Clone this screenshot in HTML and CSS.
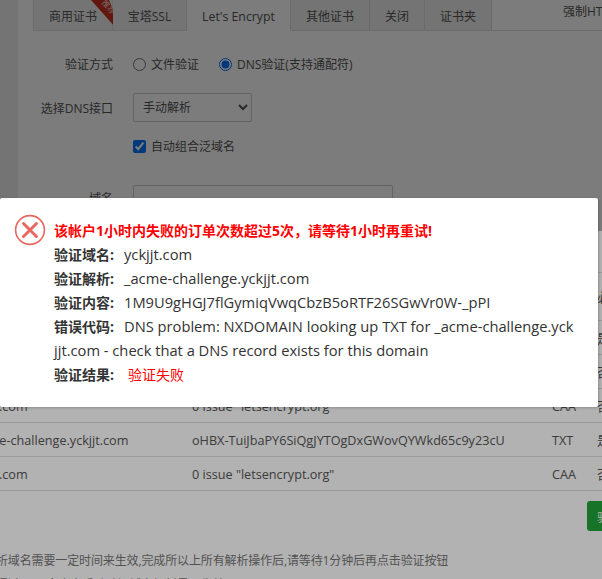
FILE: index.html
```html
<!DOCTYPE html>
<html lang="zh">
<head>
<meta charset="utf-8">
<title>SSL</title>
<link rel="stylesheet" href="styles.css">
</head>
<body>
<div class="page">
  <section class="upper">
    <div class="tabs">
      <div class="tab t1">商用证书
        <svg class="ribbon" viewBox="0 0 26 29" width="26" height="29"><polygon points="0,0 18,0 25,17 25,28" fill="#c8301e"/><text x="0" y="0" transform="translate(15.5 9) rotate(48)" class="ribbon-text" text-anchor="middle">推荐</text></svg>
      </div>
      <div class="tab t2">宝塔SSL</div>
      <div class="tab t3 active">Let's Encrypt</div>
      <div class="tab t4">其他证书</div>
      <div class="tab t5">关闭</div>
      <div class="tab t6">证书夹</div>
      <div class="tab-fill"><span>强制HTTPS</span></div>
    </div>
    <div class="form">
      <div class="row r-method">
        <label class="lbl">验证方式</label>
        <label class="opt"><input type="radio" name="m">文件验证</label>
        <label class="opt"><input type="radio" name="m" checked>DNS验证(支持通配符)</label>
      </div>
      <div class="row r-dns">
        <label class="lbl">选择DNS接口</label>
        <select class="sel"><option>手动解析</option></select>
      </div>
      <div class="row r-check">
        <span class="lbl"></span>
        <label class="opt"><input type="checkbox" checked>自动组合泛域名</label>
      </div>
      <div class="row r-domain">
        <label class="lbl">域名</label>
        <div class="domain-box"></div>
      </div>
    </div>
  </section>

  <section class="lower">
    <div class="table">
      <div class="tr head"><span>解析域名</span><span>记录值</span><span>类型</span><span>必须</span></div>
      <div class="tr"><span>_acme-challenge.yckjjt.com</span><span>xK2Z-8hTnV0cLq</span><span>TXT</span><span>是</span></div>
      <div class="tr"><span>yckjjt.com</span><span>0 issue "letsencrypt.org"</span><span>CAA</span><span>否</span></div>
      <div class="tr"><span>yckjjt.com</span><span>0 issue "letsencrypt.org"</span><span>CAA</span><span>否</span></div>
      <div class="tr"><span>_acme-challenge.yckjjt.com</span><span>oHBX-TuiJbaPY6SiQgJYTOgDxGWovQYWkd65c9y23cU</span><span>TXT</span><span>是</span></div>
      <div class="tr last"><span>yckjjt.com</span><span>0 issue "letsencrypt.org"</span><span>CAA</span><span>否</span></div>
    </div>
    <div class="actions"><button class="btn">验证</button></div>
    <ul class="notes">
      <li>解析域名需要一定时间来生效,完成所以上所有解析操作后,请等待1分钟后再点击验证按钮</li>
      <li>可通过CMD命令来手动验证域名解析是否生效: nslookup -q=txt _acme-challenge.yckjjt.com</li>
    </ul>
  </section>
</div>

<div class="shade"></div>
<div class="shade-top"></div>

<div class="dialog">
  <svg class="err-icon" viewBox="0 0 32 32" width="32" height="32">
    <circle cx="16" cy="16" r="14.4" fill="none" stroke="#e8675f" stroke-width="1.6"/>
    <path d="M9.5 9.5 L22.5 22.5 M22.5 9.5 L9.5 22.5" fill="none" stroke="#e8675f" stroke-width="3" stroke-linecap="round"/>
  </svg>
  <div class="msg">
    <p class="title">该帐户1小时内失败的订单次数超过5次&#xFF0C;请等待1小时再重试!</p>
    <p><b>验证域名:</b><span class="val">yckjjt.com</span></p>
    <p><b>验证解析:</b><span class="val">_acme-challenge.yckjjt.com</span></p>
    <p><b>验证内容:</b><span class="val">1M9U9gHGJ7flGymiqVwqCbzB5oRTF26SGwVr0W-_pPI</span></p>
    <p class="wrap"><b>错误代码:</b><span class="val">DNS problem: NXDOMAIN looking up TXT for _acme-challenge.yckjjt.com - check that a DNS record exists for this domain</span></p>
    <p><b>验证结果:</b><span class="val fail">验证失败</span></p>
  </div>
</div>
</body>
</html>
```
FILE: styles.css
```css
html, body {
  margin: 0;
  padding: 0;
  width: 602px;
  height: 579px;
  overflow: hidden;
  background: #fff;
}
body {
  font-family: "Open Sans", "Noto Sans CJK SC", sans-serif;
  font-size: 12px;
  color: #555;
}
.page { width: 602px; height: 579px; overflow: hidden; }

.upper {
  height: 231px;
  box-sizing: border-box;
  border-left: 18px solid #f0f0f0;
  overflow: hidden;
}
.tabs {
  display: flex;
  height: 31px;
  padding-left: 15px;
  box-sizing: border-box;
  white-space: nowrap;
}
.tab {
  position: relative;
  box-sizing: border-box;
  height: 31px;
  line-height: 33px;
  text-align: center;
  border: 1px solid #ddd;
  border-top: 0;
  border-left: 0;
  background: #f0f0f0;
  color: #555;
  flex: none;
}
.tab.t1 { width: 80px; border-left: 1px solid #ddd; }
.tab.t2 { width: 74px; }
.tab.t3 { width: 104px; font-size: 12.3px; }
.tab.t4 { width: 79px; }
.tab.t5 { width: 55px; }
.tab.t6 { width: 67px; }
.tab.active { background: #fff; border-bottom-color: #fff; }
.tab-fill {
  flex: 1;
  border-bottom: 1px solid #ddd;
  padding: 3px 0 0 71px;
  line-height: 17px;
  overflow: hidden;
}
.ribbon { position: absolute; left: 57px; top: 0; }
.ribbon-text { font-size: 8px; fill: #f3d7d0; }

.form { padding-top: 23px; }
.row { display: flex; align-items: center; }
.lbl { width: 95px; text-align: right; margin-right: 20px; flex: none; }
.opt { display: flex; align-items: center; margin-right: 20px; }
.opt input { margin: 0 5px 0 0; width: 13px; height: 13px; flex: none; }
.r-method { height: 20px; }
.r-dns { margin-top: 19px; height: 29px; }
.sel {
  width: 119px;
  height: 29px;
  border: 1px solid #ccc;
  border-radius: 2px;
  background: #fff;
  color: #555;
  font: 12px "Open Sans", "Noto Sans CJK SC", sans-serif;
  padding-left: 5px;
}
.r-check { margin-top: 14px; height: 20px; }
.r-domain { margin-top: 29px; align-items: flex-start; }
.r-domain .lbl { padding-top: 4px; }
.domain-box {
  width: 260px;
  height: 80px;
  box-sizing: border-box;
  border: 1px solid #ccc;
  border-radius: 2px;
}

.lower { height: 348px; overflow: hidden; }
.table { margin: 41px 0 0 -36px; width: 700px; }
.tr {
  display: grid;
  grid-template-columns: 223px 360px 45px 1fr;
  height: 34px;
  box-sizing: border-box;
  border-top: 1px solid #ddd;
  align-items: center;
  white-space: nowrap;
  font-size: 12.65px;
  color: #555;
  padding-left: 5px;
}
.tr.head { height: 48px; }
.tr.last { height: 35px; border-bottom: 1px solid #ddd; }
.actions { padding: 10px 0 0 587px; height: 30px; white-space: nowrap; }
.btn {
  width: 60px;
  height: 30px;
  border: 0;
  border-radius: 3px;
  background: #20a53a;
  color: #fff;
  font: 12px "Noto Sans CJK SC", sans-serif;
  padding: 0 0 0 10px;
  text-align: left;
}
.notes {
  list-style: none;
  margin: 18px 0 0 -16px;
  padding: 0;
  width: 700px;
  color: #777;
  line-height: 24px;
  letter-spacing: -.12px;
  white-space: nowrap;
}

.shade {
  position: absolute;
  left: 0; top: 0;
  width: 602px; height: 579px;
  background: rgba(0,0,0,.3);
}
.shade-top {
  position: absolute;
  left: 0; top: 0;
  width: 602px; height: 231px;
  background: rgba(0,0,0,.3);
}

.dialog {
  position: absolute;
  left: 0; top: 198px;
  width: 598px; height: 209px;
  background: #fff;
  border-radius: 2px;
  box-shadow: 1px 1px 3px rgba(0,0,0,.2);
}
.err-icon { position: absolute; left: 14px; top: 16px; }
.msg {
  position: absolute;
  left: 54px; top: 21px;
  width: 522px;
  font-size: 14px;
  line-height: 24px;
  color: #333;
  word-break: break-all;
}
.msg p { margin: 0; height: 24px; }
.msg p.wrap { height: 48px; }
.msg b { font-weight: 700; margin-right: 10px; line-height: 20px; }
.val { font-size: 14.7px; line-height: 20px; }
.title { color: #f00; font-weight: 700; }
.fail { color: #f00; margin-left: 4px; font-size: 14px; }
```
